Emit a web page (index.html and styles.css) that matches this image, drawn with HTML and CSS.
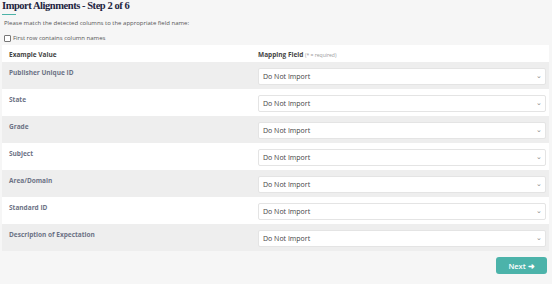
FILE: index.html
```html
<!DOCTYPE html>
<html lang="en">
<head>
    <meta charset="UTF-8">
    <meta name="viewport" content="width=device-width, initial-scale=1.0">
    <title>Import Alignments</title>
    <link rel="stylesheet" href="styles.css">
</head>
<body>
    <div class="page">
        <h1>Import Alignments - Step 2 of 6</h1>
        <div class="rule"></div>
        <p class="hint">Please match the detected columns to the appropriate field name:</p>

        <label class="check">
            <input type="checkbox" id="firstRow">
            <span>First row contains column names</span>
        </label>

        <table class="mapping">
            <thead>
                <tr>
                    <th class="col-value">Example Value</th>
                    <th class="col-field">Mapping Field <span class="req">(* = required)</span></th>
                </tr>
            </thead>
            <tbody>
                <tr>
                    <td class="name">Publisher Unique ID</td>
                    <td><div class="pick"><select><option>Do Not Import</option></select><span class="arrow">&#8964;</span></div></td>
                </tr>
                <tr>
                    <td class="name">State</td>
                    <td><div class="pick"><select><option>Do Not Import</option></select><span class="arrow">&#8964;</span></div></td>
                </tr>
                <tr>
                    <td class="name">Grade</td>
                    <td><div class="pick"><select><option>Do Not Import</option></select><span class="arrow">&#8964;</span></div></td>
                </tr>
                <tr>
                    <td class="name">Subject</td>
                    <td><div class="pick"><select><option>Do Not Import</option></select><span class="arrow">&#8964;</span></div></td>
                </tr>
                <tr>
                    <td class="name">Area/Domain</td>
                    <td><div class="pick"><select><option>Do Not Import</option></select><span class="arrow">&#8964;</span></div></td>
                </tr>
                <tr>
                    <td class="name">Standard ID</td>
                    <td><div class="pick"><select><option>Do Not Import</option></select><span class="arrow">&#8964;</span></div></td>
                </tr>
                <tr>
                    <td class="name">Description of Expectation</td>
                    <td><div class="pick"><select><option>Do Not Import</option></select><span class="arrow">&#8964;</span></div></td>
                </tr>
            </tbody>
        </table>

        <div class="actions">
            <button class="next">Next <span class="go">&#10140;</span></button>
        </div>
    </div>
</body>
</html>
```

FILE: styles.css
```css
body {
    margin: 0;
    background-color: #f6f6f6;
    font-family: "Open Sans", sans-serif;
    color: #444;
}
.page {
    padding: 0 3px 0 2px;
}
h1 {
    font-family: "Liberation Serif", serif;
    font-size: 10.5px;
    line-height: 12px;
    letter-spacing: -0.45px;
    font-weight: bold;
    color: #1d2440;
    margin: 0;
}
.rule {
    width: 14px;
    height: 1px;
    background-color: #4db3a8;
    margin-top: 2px;
}
.hint {
    font-size: 6px;
    line-height: 8px;
    color: #555;
    margin: 4px 0 0 2px;
}
.check {
    display: flex;
    align-items: center;
    gap: 2px;
    margin: 7px 0 0 2px;
    font-size: 6px;
    line-height: 8px;
    color: #555;
}
.check input {
    appearance: none;
    -webkit-appearance: none;
    width: 7px;
    height: 7px;
    margin: 0;
    border: 1px solid #777;
    border-radius: 1px;
    background-color: #fff;
}
.mapping {
    width: 100%;
    border-collapse: collapse;
    margin-top: 3px;
}
.mapping th {
    box-sizing: border-box;
    background-color: #fff;
    text-align: left;
    font-size: 6.5px;
    line-height: 8px;
    font-weight: bold;
    color: #444;
    height: 17px;
    padding: 2px 0 0 0;
}
.mapping .col-value {
    padding-left: 7px;
}
.mapping .col-field {
    width: 291px;
    padding-right: 3px;
}
.req {
    font-size: 5px;
    font-weight: normal;
    color: #999;
}
.mapping td {
    box-sizing: border-box;
    height: 27px;
    padding: 0;
    vertical-align: top;
}
.mapping tbody tr:nth-child(odd) {
    background-color: #eeeeee;
}
.mapping tbody tr:nth-child(even) {
    background-color: #fff;
}
.mapping td.name {
    padding: 7px 0 0 7px;
    font-size: 6.5px;
    line-height: 8px;
    font-weight: bold;
    color: #6c7285;
}
.pick {
    position: relative;
    display: flex;
    margin: 6px 3px 0 0;
    line-height: 0;
}
.pick select {
    appearance: none;
    -webkit-appearance: none;
    width: 100%;
    height: 17px;
    border: 1px solid #e4e4e4;
    border-radius: 2px;
    background-color: #fff;
    font-family: "Open Sans", sans-serif;
    font-size: 7px;
    color: #444;
    padding: 0 4px;
}
.arrow {
    position: absolute;
    right: 4px;
    top: 4px;
    font-size: 7px;
    line-height: 7px;
    color: #888;
}
.actions {
    display: flex;
    justify-content: flex-end;
    margin-top: 6px;
    padding-right: 2px;
}
.next {
    width: 51px;
    height: 17px;
    border: none;
    border-radius: 3px;
    background-color: #4cb3aa;
    color: #fff;
    font-family: "Open Sans", sans-serif;
    font-size: 7.5px;
    font-weight: 600;
    cursor: pointer;
}
.go {
    font-size: 7.5px;
}
```
